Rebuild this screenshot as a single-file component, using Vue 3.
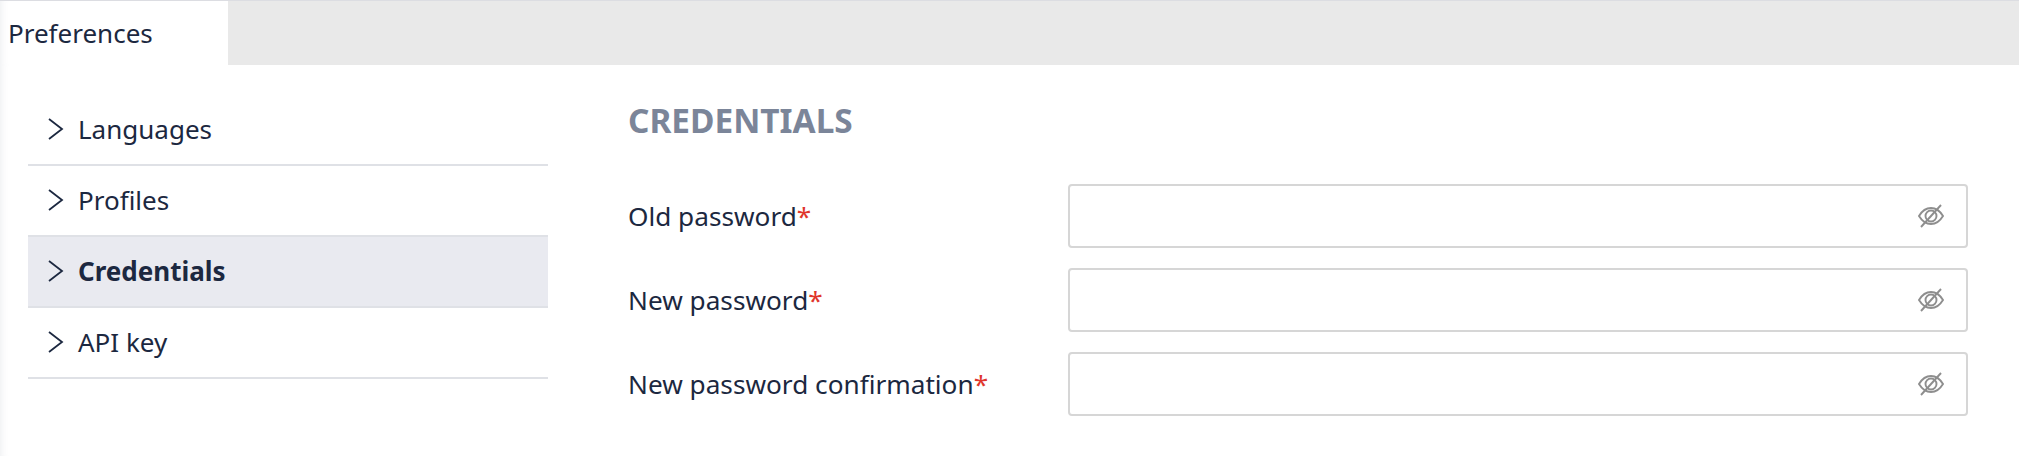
<script setup>
const menu = [
    { label: "Languages" },
    { label: "Profiles" },
    { label: "Credentials", active: true },
    { label: "API key" },
];
const fields = ["Old password", "New password", "New password confirmation"];
</script>

<template>
    <div class="page">
        <div class="tabs">
            <div class="tab">Preferences</div>
        </div>
        <div class="content">
            <ul class="menu">
                <li
                    v-for="item in menu"
                    :key="item.label"
                    class="menu-item"
                    :class="{ active: item.active }"
                >
                    <svg class="chevron" width="16" height="22" viewBox="0 0 16 22">
                        <path d="M1 1l13 10L1 21" fill="none" stroke="#1c2840" stroke-width="1.8" />
                    </svg>
                    <span>{{ item.label }}</span>
                </li>
            </ul>
            <form class="form">
                <h2>CREDENTIALS</h2>
                <div class="field" v-for="field in fields" :key="field">
                    <label>{{ field }}<span class="req">*</span></label>
                    <div class="input">
                        <svg width="26" height="24" viewBox="0 0 26 24" fill="none" stroke="#8e8e8e" stroke-width="1.9">
                            <path d="M1 12c3-5 7-8 12-8s9 3 12 8c-3 5-7 8-12 8s-9-3-12-8z" />
                            <circle cx="13" cy="12" r="5.5" />
                            <path d="M23 1L3 23" />
                        </svg>
                    </div>
                </div>
            </form>
        </div>
    </div>
</template>

<style>
html,
body {
    margin: 0;
    background: #ffffff;
}
</style>

<style scoped>
.page {
    width: 2019px;
    height: 456px;
    overflow: hidden;
    font-family: "Noto Sans", sans-serif;
    color: #1c2840;
}

.tabs {
    height: 65px;
    background: #e9e9e9;
    border-top: 1px solid #dcdde2;
    box-sizing: border-box;
}

.tab {
    width: 228px;
    height: 64px;
    background: #ffffff;
    box-shadow: inset 8px 0 8px -8px rgba(60, 70, 110, 0.12);
    box-sizing: border-box;
    padding: 14px 0 0 8px;
    font-size: 26px;
}

.content {
    display: flex;
    height: 391px;
    padding-left: 28px;
    box-shadow: inset 8px 0 8px -8px rgba(60, 70, 110, 0.12);
}

.menu {
    list-style: none;
    width: 520px;
    margin: 30px 0 0;
    padding: 0;
}

.menu-item {
    height: 71px;
    box-sizing: border-box;
    border-bottom: 2px solid #dfe1e6;
    display: flex;
    align-items: center;
    gap: 14px;
    padding: 0 0 2px 20px;
    font-size: 26px;
}

.menu-item.active {
    background: #e9eaf0;
    font-weight: 700;
}

.form {
    margin-left: 80px;
    flex: 1;
    padding-right: 51px;
}

h2 {
    margin: 37px 0 46px;
    font-size: 33.4px;
    line-height: 36px;
    font-weight: 700;
    color: #7b8599;
}

.field {
    display: flex;
    align-items: center;
    margin-bottom: 20px;
}

label {
    width: 440px;
    font-size: 26.2px;
}

.req {
    color: #e0352b;
}

.input {
    flex: 1;
    height: 64px;
    box-sizing: border-box;
    border: 2px solid #d6d6d6;
    border-radius: 4px;
    display: flex;
    align-items: center;
    justify-content: flex-end;
    padding-right: 22px;
}
</style>
